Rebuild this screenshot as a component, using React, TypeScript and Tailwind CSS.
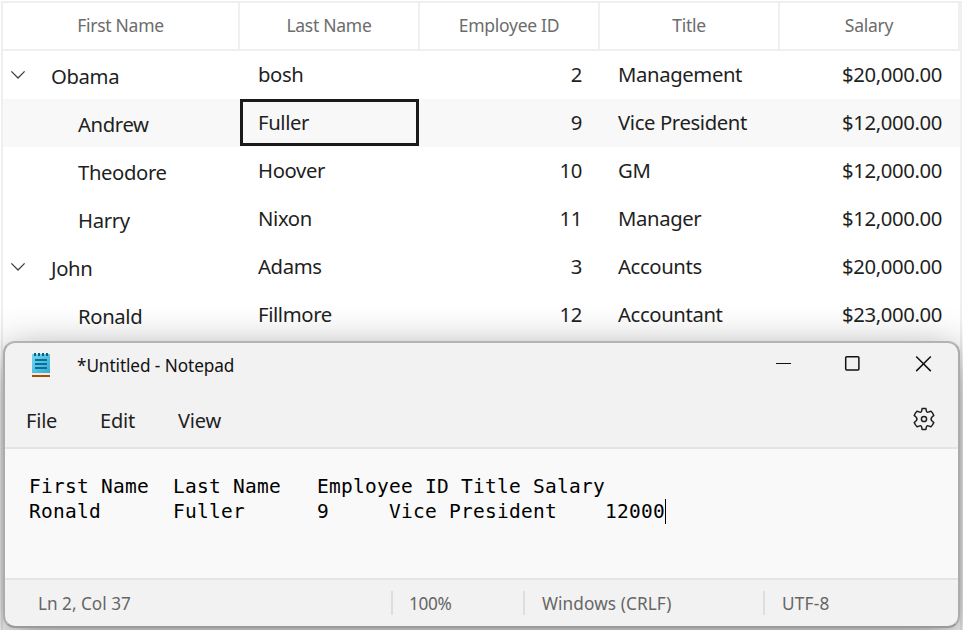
import { Fragment } from "react";

const columns = ["First Name", "Last Name", "Employee ID", "Title", "Salary"];

type Employee = {
  first: string;
  last: string;
  id: number;
  title: string;
  salary: string;
  parent?: boolean;
};

const employees: Employee[] = [
  { first: "Obama", last: "bosh", id: 2, title: "Management", salary: "$20,000.00", parent: true },
  { first: "Andrew", last: "Fuller", id: 9, title: "Vice President", salary: "$12,000.00" },
  { first: "Theodore", last: "Hoover", id: 10, title: "GM", salary: "$12,000.00" },
  { first: "Harry", last: "Nixon", id: 11, title: "Manager", salary: "$12,000.00" },
  { first: "John", last: "Adams", id: 3, title: "Accounts", salary: "$20,000.00", parent: true },
  { first: "Ronald", last: "Fillmore", id: 12, title: "Accountant", salary: "$23,000.00" },
];

const rowGrid = "grid grid-cols-[237px_180px_180px_180px_180px]";

function Chevron() {
  return (
    <svg width="16" height="10" viewBox="0 0 16 10" fill="none" stroke="#3f3f3f" strokeWidth="1.3">
      <path d="M1.4 1.4 8 8l6.6-6.6" />
    </svg>
  );
}

function TreeGrid() {
  return (
    <div className="ml-px mt-px h-[629px] w-[961px] border-2 border-b-0 border-[#efefef]">
      <div className={`${rowGrid} h-12 border-b-2 border-[#efefef] text-[17.5px] tracking-[-0.27px] text-[#6c6c6c]`}>
        {columns.map((name) => (
          <div key={name} className="flex items-center justify-center border-r-2 border-[#efefef] pb-[2px]">
            {name}
          </div>
        ))}
      </div>
      {employees.map((e) => {
        const focused = e.first === "Andrew";
        return (
          <div
            key={e.first}
            className={`${rowGrid} h-12 text-[20.3px] leading-[46px] tracking-[-0.38px] text-[#1f1f1f] ${focused ? "bg-[#f8f8f8]" : ""}`}
          >
            <div className="flex h-12 items-center pt-[2px]">
              {e.parent && (
                <div className="-mt-[3px] ml-[7px] flex w-[41px]">
                  <Chevron />
                </div>
              )}
              <span className={e.parent ? "" : "ml-[75px]"}>{e.first}</span>
            </div>
            {focused ? (
              <div className="h-[47px] w-[179px] border-[3px] border-[#1a1a1a] pl-[15px] leading-[40px]">{e.last}</div>
            ) : (
              <div className="pl-[18px]">{e.last}</div>
            )}
            <div className="pr-[18px] text-right">{e.id}</div>
            <div className="pl-[18px]">{e.title}</div>
            <div className="pr-[18px] text-right">{e.salary}</div>
          </div>
        );
      })}
    </div>
  );
}

function NotepadLogo() {
  return (
    <svg width="18" height="25" viewBox="0 0 18 25" shapeRendering="crispEdges">
      <defs>
        <linearGradient id="page" x1="0" y1="0" x2="1" y2="1">
          <stop offset="0" stopColor="#72d6ef" />
          <stop offset="1" stopColor="#36a8d0" />
        </linearGradient>
      </defs>
      <rect y="1" width="18" height="20" fill="url(#page)" />
      <rect y="20" width="18" height="2" fill="#f0e9e6" />
      <rect y="22" width="18" height="2" fill="#a84d08" />
      <path d="M2 0h2v3H2zM6 0h2v3H6zM10 0h2v3h-2zM14 0h2v3h-2z" fill="#096386" />
      <path d="M3 6h12v2H3zM3 10h12v2H3zM3 14h12v2H3z" fill="#087098" />
    </svg>
  );
}

function GearIcon() {
  return (
    <svg width="24" height="24" viewBox="0 0 24 24" fill="none" stroke="#1f1f1f" strokeWidth="1.5" strokeLinejoin="round">
      <circle cx="12" cy="12" r="2.6" />
      <path d="M10.1 1.6Q12 1.2 13.9 1.6L14.4 4.1Q14.8 5.5 16.2 5.1L18.8 4.2Q20.7 5.6 21.8 8.4L19.8 10.2Q18.3 12 19.8 13.8L21.8 15.6Q20.7 18.4 18.8 19.8L16.2 18.9Q14.8 18.5 14.4 19.9L13.9 22.4Q12 22.8 10.1 22.4L9.6 19.9Q9.2 18.5 7.8 18.9L5.2 19.8Q3.3 18.4 2.2 15.6L4.2 13.8Q5.7 12 4.2 10.2L2.2 8.4Q3.3 5.6 5.2 4.2L7.8 5.1Q9.2 5.5 9.6 4.1Z" />
    </svg>
  );
}

const noteLines = [
  "First Name  Last Name   Employee ID Title Salary",
  "Ronald      Fuller      9     Vice President    12000",
];

function Notepad() {
  return (
    <div className="absolute left-[3px] top-[341px] flex h-[287px] w-[957px] flex-col overflow-hidden rounded-xl border-2 border-x-[#acacac] border-b-[#9a9a9a] border-t-[#b3b3b3] bg-[#f2f2f2] shadow-[0_12px_44px_rgba(0,0,0,0.46)]">
      <div className="flex h-[44px] items-center pl-[27px] text-[17.2px] tracking-[-0.08px] text-[#111]">
        <NotepadLogo />
        <span className="ml-[27px] mt-[2px]">*Untitled - Notepad</span>
        <svg className="-mt-[2px] ml-auto mr-[26px]" width="157" height="18" viewBox="0 0 157 18" fill="none" stroke="#111" strokeWidth="1.5">
          <path d="M1 8.5h15" strokeWidth="1" />
          <rect x="70.7" y="1.7" width="13.2" height="13.2" rx="1" />
          <path d="m141.2 1.500 14.6 14.6M155.800 1.500 141.200 16.100" />
        </svg>
      </div>
      <div className="flex h-[62px] items-center border-b-2 border-[#e4e4e4] pl-[21px] pr-[22px] pt-2 text-[20px] tracking-[-0.2px] text-[#1f1f1f]">
        <span className="w-[74px]">File</span>
        <span className="w-[78px]">Edit</span>
        <span>View</span>
        <span className="ml-auto -mt-1">
          <GearIcon />
        </span>
      </div>
      <div className="h-[129px] bg-[#f9f9f9] pl-6 pt-[25px] font-['DejaVu_Sans_Mono',monospace] text-[19.5px] leading-[25px] tracking-[0.26px] text-black">
        {noteLines.map((line, i) => (
          <Fragment key={line}>
            <div className="flex whitespace-pre">
              {line}
              {i === 1 && <span className="h-[25px] w-px bg-black" />}
            </div>
          </Fragment>
        ))}
      </div>
      <div className="flex flex-1 items-center border-t-2 border-[#e4e4e4] pl-[33px] text-[17.2px] leading-[26px] text-[#666]">
        <span className="w-[353px] pt-[2px]">Ln 2, Col 37</span>
        <span className="flex h-6 w-[132px] items-center border-l-2 border-[#dedede] pl-4 pt-[2px] tracking-[-0.3px]">100%</span>
        <span className="flex h-6 w-[240px] items-center border-l-2 border-[#dedede] pl-[17px] pt-[2px] tracking-[0.1px]">Windows (CRLF)</span>
        <span className="flex h-6 items-center border-l-2 border-[#dedede] pl-[17px] pt-[2px] tracking-[0.2px]">UTF-8</span>
      </div>
    </div>
  );
}

export default function App() {
  return (
    <div className="relative h-[630px] w-[963px] overflow-hidden bg-white font-['Noto_Sans','Open_Sans',sans-serif]">
      <TreeGrid />
      <Notepad />
    </div>
  );
}
